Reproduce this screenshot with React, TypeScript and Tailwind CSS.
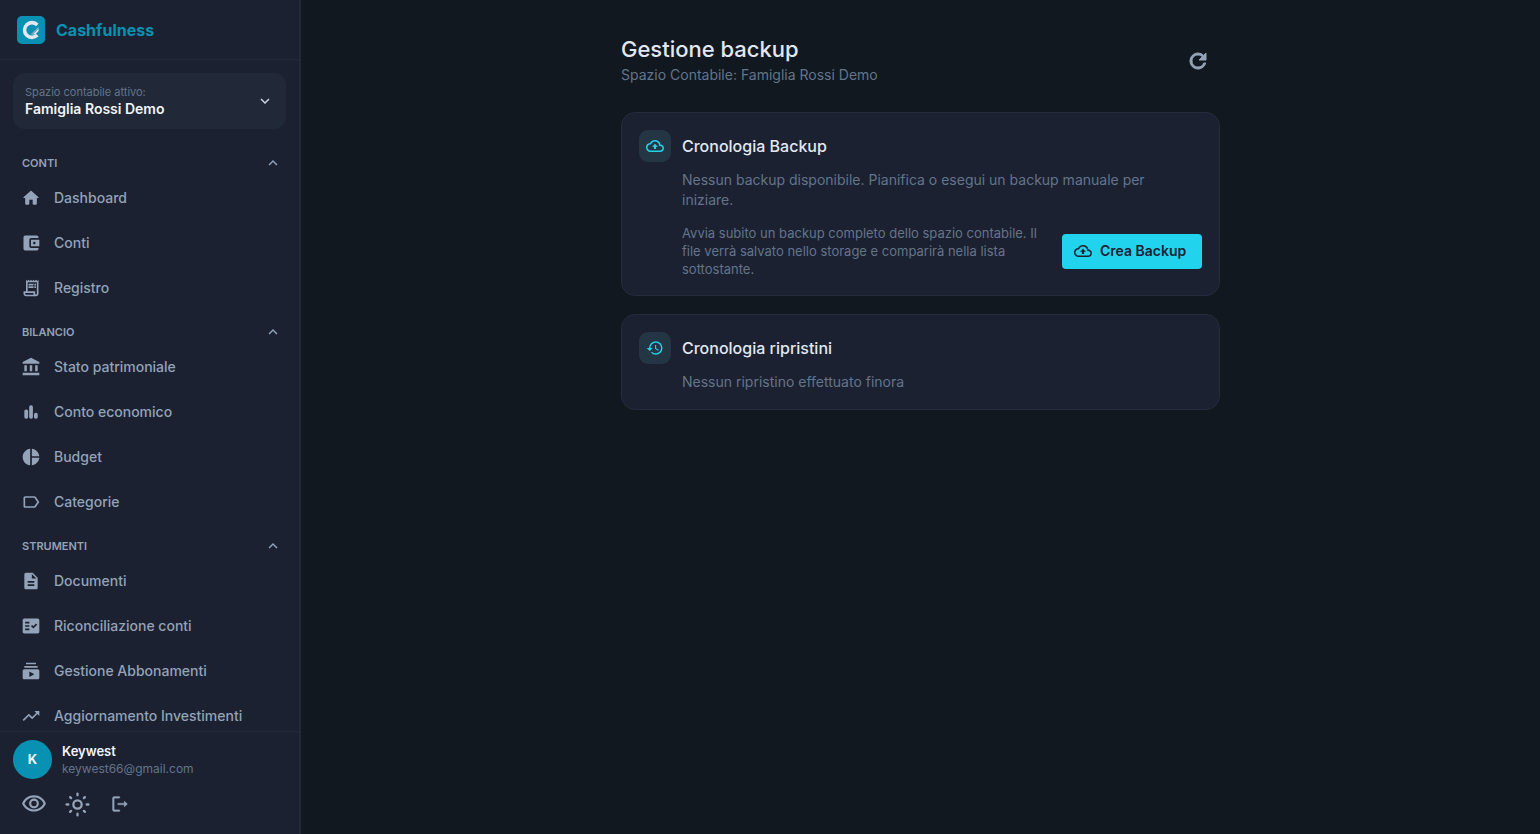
import React from 'react';
import type { IconType } from 'react-icons';
import {
  MdAccountBalance,
  MdAccountBalanceWallet,
  MdDescription,
  MdFactCheck,
  MdHistory,
  MdKeyboardArrowDown,
  MdKeyboardArrowUp,
  MdLabelOutline,
  MdOutlineBackup,
  MdOutlineVisibility,
  MdPieChart,
  MdRefresh,
  MdSubscriptions,
  MdTrendingUp,
} from 'react-icons/md';

type IconProps = { className?: string };

const HomeIcon = ({ className }: IconProps) => (
  <svg viewBox="0 0 24 24" fill="currentColor" className={className}>
    <path d="M10 19v-5h4v5c0 .55.45 1 1 1h3c.55 0 1-.45 1-1v-7h1.700c.46 0 .68-.57.33-.87L12.670 3.600c-.38-.34-.96-.34-1.340 0l-8.360 7.530c-.34.3-.13.87.33.87H5v7c0 .55.45 1 1 1h3c.55 0 1-.45 1-1z" />
  </svg>
);

const ReceiptIcon = ({ className }: IconProps) => (
  <svg viewBox="0 0 24 24" fill="currentColor" className={className}>
    <path d="M19.500 3.500 18 2l-1.500 1.500L15 2l-1.500 1.500L12 2l-1.500 1.500L9 2 7.500 3.500 6 2v14H3v3c0 1.660 1.340 3 3 3h12c1.660 0 3-1.340 3-3V2l-1.500 1.500zM15 20H6c-.55 0-1-.45-1-1v-1h10v2zm4-1c0 .55-.45 1-1 1s-1-.45-1-1v-3H8V5h11v14z" />
    <path d="M9 7h6v2H9zM16 7h2v2h-2zM9 10h6v2H9zM16 10h2v2h-2z" />
  </svg>
);

const BarsIcon = ({ className }: IconProps) => (
  <svg viewBox="0 0 24 24" fill="currentColor" className={className}>
    <rect x="4" y="9" width="4.500" height="11" rx="2" />
    <rect x="9.800" y="4" width="4.500" height="16" rx="2" />
    <rect x="15.600" y="13" width="4.500" height="7" rx="2" />
  </svg>
);

const SunIcon = ({ className }: IconProps) => (
  <svg viewBox="0 0 24 24" fill="none" stroke="currentColor" strokeWidth="2.200" strokeLinecap="round" className={className}>
    <circle cx="12" cy="12" r="4" />
    <path d="M12 1.500v1.700M12 20.800v1.700M1.500 12h1.700M20.800 12h1.700M4.900 4.900l1 1M18.100 18.100l1 1M4.900 19.100l1-1M18.100 5.900l1-1" />
  </svg>
);

const LogoutIcon = ({ className }: IconProps) => (
  <svg viewBox="0 0 24 24" fill="currentColor" stroke="currentColor" strokeWidth="0.400" className={className}>
    <path d="M5 5h6c.55 0 1-.45 1-1s-.45-1-1-1H5c-1.100 0-2 .9-2 2v14c0 1.100.9 2 2 2h6c.55 0 1-.45 1-1s-.45-1-1-1H5V5z" />
    <path d="m20.650 11.650-2.790-2.790c-.32-.32-.86-.1-.86.350V11h-7c-.55 0-1 .45-1 1s.45 1 1 1h7v1.790c0 .45.540.670.850.350l2.790-2.790c.2-.19.2-.51.010-.7z" />
  </svg>
);

const Logo = () => (
  <svg viewBox="0 0 28 28" className="size-7" aria-hidden="true">
    <rect width="28" height="28" rx="5" fill="#0891b2" />
    <path d="M20.300 8.900A7.400 7.400 0 1 0 20.300 19.100" fill="none" stroke="#e2e8f0" strokeWidth="3.600" />
    <path d="M14.500 18.500 21.600 11.500" fill="none" stroke="#94a3b8" strokeWidth="1.300" />
    <path d="M15.500 18.800 21.600 12.800v2.200l-3 3z" fill="#e2e8f0" />
  </svg>
);

type NavItem = { label: string; icon: IconType | React.FC<IconProps> };

const sections: { title: string; items: NavItem[] }[] = [
  {
    title: 'CONTI',
    items: [
      { label: 'Dashboard', icon: HomeIcon },
      { label: 'Conti', icon: MdAccountBalanceWallet },
      { label: 'Registro', icon: ReceiptIcon },
    ],
  },
  {
    title: 'BILANCIO',
    items: [
      { label: 'Stato patrimoniale', icon: MdAccountBalance },
      { label: 'Conto economico', icon: BarsIcon },
      { label: 'Budget', icon: MdPieChart },
      { label: 'Categorie', icon: MdLabelOutline },
    ],
  },
  {
    title: 'STRUMENTI',
    items: [
      { label: 'Documenti', icon: MdDescription },
      { label: 'Riconciliazione conti', icon: MdFactCheck },
      { label: 'Gestione Abbonamenti', icon: MdSubscriptions },
      { label: 'Aggiornamento Investimenti', icon: MdTrendingUp },
    ],
  },
];

const Sidebar = () => (
  <aside className="flex h-full w-[301px] shrink-0 flex-col border-r-2 border-[#222938] bg-[#1b2130]">
    <div className="flex h-[60px] shrink-0 items-center gap-[11px] border-b border-[#222a39] px-[17px]">
      <Logo />
      <span className="text-base font-bold text-[#0891b2]">Cashfulness</span>
    </div>

    <div className="px-[13px] pt-[13px]">
      <button className="flex h-14 w-full items-center justify-between rounded-xl bg-[#212938] px-3 text-left">
        <span className="flex flex-col">
          <span className="text-[11px] leading-4 text-[#64748b]">Spazio contabile attivo:</span>
          <span className="text-sm leading-[18px] font-semibold text-[#f1f5f9]">Famiglia Rossi Demo</span>
        </span>
        <MdKeyboardArrowDown className="size-[18px] text-[#cbd5e1]" />
      </button>
    </div>

    <nav className="min-h-0 flex-1 overflow-hidden pt-[22px]">
      {sections.map((section) => (
        <div key={section.title}>
          <button className="flex h-6 w-full items-center justify-between pr-[17px] pl-[22px] text-[#94a3b8]">
            <span className="text-[11px] font-semibold">{section.title}</span>
            <MdKeyboardArrowUp className="size-[18px]" />
          </button>
          <ul className="pb-2.5">
            {section.items.map(({ label, icon: Icon }) => (
              <li key={label}>
                <a href="#" className="flex h-[45px] items-center gap-[13px] px-[21px] text-sm font-medium text-[#94a3b8]">
                  <Icon className="size-5" />
                  {label}
                </a>
              </li>
            ))}
          </ul>
        </div>
      ))}
    </nav>

    <div className="shrink-0 border-t border-[#222a39] px-[13px] pt-2 pb-[17px]">
      <div className="flex items-center gap-2.5">
        <div className="flex size-[39px] items-center justify-center rounded-full bg-[#0891b2] text-[13px] font-bold text-[#f1f5f9]">
          K
        </div>
        <div>
          <p className="text-[13px] leading-[18px] font-semibold text-[#f1f5f9]">Keywest</p>
          <p className="text-xs leading-[18px] text-[#64748b]">keywest66@gmail.com</p>
        </div>
      </div>
      <div className="flex items-center gap-[18px] px-2 pt-3 text-[#94a3b8]">
        <button aria-label="Mostra importi">
          <MdOutlineVisibility className="size-[26px]" />
        </button>
        <button aria-label="Cambia tema">
          <SunIcon className="size-[25px]" />
        </button>
        <button aria-label="Esci" className="flex size-6 items-center justify-center">
          <LogoutIcon className="size-5" />
        </button>
      </div>
    </div>
  </aside>
);

type CardProps = { title: string; icon: IconType; children: React.ReactNode };

const Card = ({ title, icon: Icon, children }: CardProps) => (
  <section className="rounded-[14px] border border-[#252c3b] bg-[#1b2130] p-[17px]">
    <div className="flex items-center gap-[11px]">
      <div className="flex size-8 items-center justify-center rounded-[9px] bg-[#243644]">
        <Icon className="size-[18px] text-[#22d3ee]" />
      </div>
      <h2 className="text-base font-medium text-[#e2e8f0]">{title}</h2>
    </div>
    <div className="pl-[43px]">{children}</div>
  </section>
);

const App = () => {
  return (
    <div className="flex h-screen bg-[#111820] font-['Inter',sans-serif]">
      <Sidebar />
      <main className="min-w-0 flex-1 overflow-auto px-5 pt-[35px]">
        <div className="mx-auto max-w-[599px]">
          <header className="mb-[26px] flex items-center justify-between pr-2.5">
            <div>
              <h1 className="text-[22px] leading-[29px] font-medium text-[#e2e8f0]">Gestione backup</h1>
              <p className="text-sm leading-[22px] text-[#64748b]">Spazio Contabile: Famiglia Rossi Demo</p>
            </div>
            <button aria-label="Aggiorna" className="text-[#94a3b8]">
              <MdRefresh className="size-6 [&>path:last-child]:stroke-current [&>path:last-child]:stroke-1" />
            </button>
          </header>

          <div className="flex flex-col gap-[18px]">
            <Card title="Cronologia Backup" icon={MdOutlineBackup}>
              <p className="pt-2 pr-4 text-sm leading-5 text-[#64748b]">
                Nessun backup disponibile. Pianifica o esegui un backup manuale per iniziare.
              </p>
              <div className="flex items-center gap-3 pt-3.5">
                <p className="flex-1 text-[13px] leading-[18px] text-[#64748b]">
                  Avvia subito un backup completo dello spazio contabile. Il file verrà salvato nello storage e comparirà
                  nella lista sottostante.
                </p>
                <button className="flex h-[35px] w-[140px] shrink-0 items-center gap-2 rounded bg-[#22d3ee] px-3 text-sm font-semibold whitespace-nowrap text-[#1b2130]">
                  <MdOutlineBackup className="size-[18px]" />
                  Crea Backup
                </button>
              </div>
            </Card>

            <Card title="Cronologia ripristini" icon={MdHistory}>
              <p className="pt-2 text-sm leading-5 text-[#64748b]">Nessun ripristino effettuato finora</p>
            </Card>
          </div>
        </div>
      </main>
    </div>
  );
};

export default App;
